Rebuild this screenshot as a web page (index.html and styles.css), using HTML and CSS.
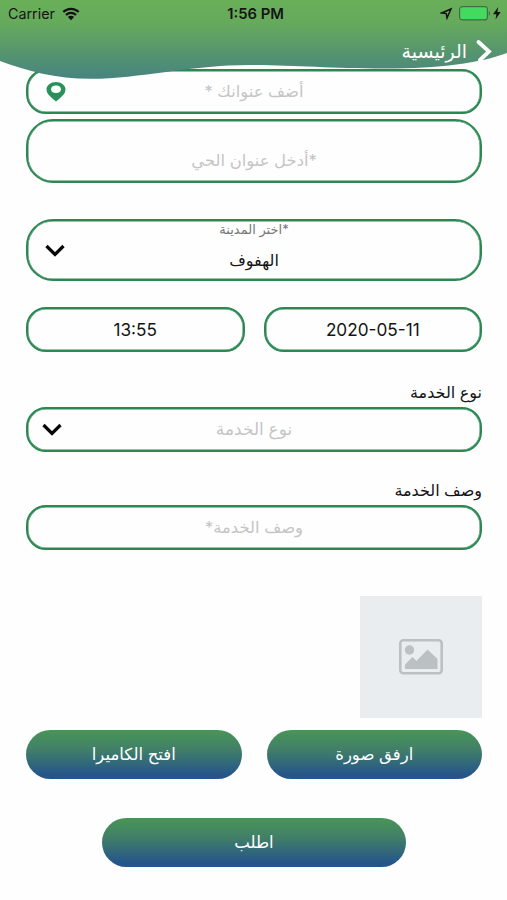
FILE: index.html
```html
<!DOCTYPE html>
<html lang="ar" dir="rtl">
<head>
<meta charset="utf-8">
<title>الرئيسية</title>
<link rel="stylesheet" href="styles.css">
</head>
<body>
<header class="header">
  <svg class="wave" width="507" height="80" viewBox="0 0 507 80" aria-hidden="true">
    <defs><linearGradient id="sky" x1="0" y1="0" x2="0" y2="1"><stop offset="0" stop-color="#69af59"/><stop offset=".28" stop-color="#66aa5c"/><stop offset=".65" stop-color="#57966e"/><stop offset="1" stop-color="#468480"/></linearGradient></defs>
    <path fill="url(#sky)" d="M0 0H507V53C480 63 440 68.500 385 68.500C330 68.500 295 65 250 65C190 65 140 78.800 91 78.800C55 78.800 28 71 0 61Z"/>
  </svg>
  <div class="status" dir="ltr">
    <div class="side">
      <span class="carrier">Carrier</span>
      <svg width="18" height="14" viewBox="0 0 18 14" fill="none" stroke="#111" stroke-width="2.200"><path d="M1.300 5C5.500.700 12.500.700 16.700 5M4 8C6.800 5.200 11.200 5.200 14 8"/><path fill="#111" stroke="none" d="M9 13.200L5.900 10C7.500 8.400 10.500 8.400 12.100 10Z"/></svg>
    </div>
    <span class="clock">1:56 PM</span>
    <div class="side end">
      <svg width="13" height="13" viewBox="0 0 13 13" fill="none" stroke="#111" stroke-width="1.500" stroke-linejoin="miter"><path d="M1.600 6L11 2L7 11L6.300 6.600Z"/></svg>
      <svg class="battery" width="32" height="15" viewBox="0 0 32 15"><rect x=".6" y=".6" width="27.800" height="13.300" rx="3" fill="none" stroke="#3f7044" stroke-width="1.200"/><rect x="1.500" y="1.500" width="26" height="11.500" rx="1.500" fill="#44da60"/><path fill="#3f7044" d="M29.800 5C31.600 5.800 31.600 9 29.800 9.800Z"/></svg>
      <svg width="8" height="13" viewBox="0 0 8 13"><path fill="#111" d="M5.200 0L0 7.200H3.400L2.500 12.500L7.700 5H4.400Z"/></svg>
    </div>
  </div>
  <div class="nav">
    <svg width="17" height="24" viewBox="0 0 17 24" fill="none" stroke="#fff" stroke-width="3.800" stroke-linecap="round"><path d="M2.500 3L13 12.500L4 21"/></svg>
    <h1>الرئيسية</h1>
  </div>
</header>
<main class="form">
  <div class="field address">
    <span class="hint">أضف عنوانك *</span>
    <svg class="icon" width="20" height="20" viewBox="0 0 20 20"><path fill="#2b915b" fill-rule="evenodd" d="M10 0C4.800 0 .500 3.200.500 7.500C.500 11.800 5 15.500 10 19.500C15 15.500 19.500 11.800 19.500 7.500C19.500 3.200 15.200 0 10 0ZM10 3.500C13 3.500 15 5.100 15 7.200S13 11 10 11S5 9.300 5 7.200S7 3.500 10 3.500Z"/></svg>
  </div>
  <div class="field district"><span class="hint">*أدخل عنوان الحي</span></div>
  <div class="field city">
    <span class="caption">*اختر المدينة</span>
    <span class="value">الهفوف</span>
    <svg class="icon" width="20" height="14" viewBox="0 0 20 14" fill="none" stroke="#080808" stroke-width="3.200"><path d="M1.500 2L10 10.500L18.500 2"/></svg>
  </div>
  <div class="pair times">
    <div class="field number">2020-05-11</div>
    <div class="field number">13:55</div>
  </div>
  <label class="label">نوع الخدمة</label>
  <div class="field service">
    <span class="hint">نوع الخدمة</span>
    <svg class="icon" width="20" height="14" viewBox="0 0 20 14" fill="none" stroke="#080808" stroke-width="3.200"><path d="M1.500 2L10 10.500L18.500 2"/></svg>
  </div>
  <label class="label second">وصف الخدمة</label>
  <div class="field"><span class="hint">وصف الخدمة*</span></div>
  <div class="photo">
    <svg width="44" height="36" viewBox="0 0 44 36"><rect x="1.300" y="1.300" width="41.400" height="33" rx="3" fill="none" stroke="#bbc0c3" stroke-width="2.600"/><circle cx="10.500" cy="11" r="4.700" fill="#bbc0c3"/><path fill="#bbc0c3" d="M6 30V25.500L13.500 18L17.500 22L28.500 10.500L38.500 20V30Z"/></svg>
  </div>
  <div class="pair actions">
    <button class="button">ارفق صورة</button>
    <button class="button">افتح الكاميرا</button>
  </div>
  <button class="button submit">اطلب</button>
</main>
</body>
</html>
```
FILE: styles.css
```css
* { box-sizing: border-box; }
body {
  margin: 0;
  width: 507px;
  height: 900px;
  overflow: hidden;
  background: #fefefe;
  color: #151515;
  font-family: Inter, "DejaVu Sans", sans-serif;
  font-size: 16px;
}
svg { display: block; flex: none; }
.header { position: relative; z-index: 1; height: 69px; }
.wave { position: absolute; top: 0; left: 0; }
.status {
  position: relative;
  display: grid;
  grid-template-columns: 1fr auto 1fr;
  height: 27px;
  padding: 0 6px 0 8px;
  align-items: center;
  font-size: 14.300px;
}
.side { display: flex; align-items: center; gap: 7px; }
.end { justify-content: flex-end; gap: 6px; }
.battery { margin-right: -4px; }
.clock { padding-left: 2px; font-size: 14.800px; font-weight: 600; }
.nav {
  position: relative;
  display: flex;
  align-items: center;
  height: 24px;
  margin-top: 12px;
  padding-right: 14px;
  gap: 9px;
  color: #fff;
}
h1 { margin: 2px 0 0; font-size: 19px; font-weight: 400; line-height: 24px; }
.form { padding: 0 25px 0 26px; }
.field {
  position: relative;
  display: flex;
  align-items: center;
  justify-content: center;
  height: 45px;
  padding-bottom: 2px;
  border: 2px solid #2c8753;
  border-radius: 20px;
  box-shadow: inset 0 0 0 .5px #2c8753;
}
.icon { position: absolute; left: 17px; }
.address .icon { top: 11px; left: 18px; }
.service .icon { top: 14px; left: 14px; }
.hint { color: #c5c5c5; font-size: 16.400px; }
.district { height: 64px; margin-top: 5px; padding-top: 20px; border-radius: 27px; }
.city {
  flex-direction: column;
  justify-content: flex-start;
  height: 62px;
  margin-top: 36px;
  border-radius: 27px;
}
.city .icon { top: 23px; }
.caption { color: #777; font-size: 13px; line-height: 16px; }
.value { margin-top: 11px; line-height: 24px; }
.pair { display: grid; grid-template-columns: 1fr 1fr; }
.times { gap: 19px; margin-top: 26px; }
.number { padding: 0; font-size: 17.200px; }
.label { display: block; height: 30px; margin-top: 25px; line-height: 30px; font-size: 16px; }
.second { margin-top: 23px; }
.service .hint { font-size: 17px; }
.photo {
  display: flex;
  align-items: center;
  justify-content: center;
  width: 122px;
  height: 122px;
  margin-top: 46px;
  background: #e9edf0;
}
.actions { gap: 25px; margin-top: 12px; }
.button {
  display: block;
  height: 49px;
  padding: 0 0 2px;
  border: 0;
  border-radius: 25px;
  background: linear-gradient(#489557, #417f68 40%, #265689 90%);
  color: #fff;
  font: inherit;
  font-size: 16.500px;
}
.submit { width: 304px; margin: 39px auto 0; }
```
